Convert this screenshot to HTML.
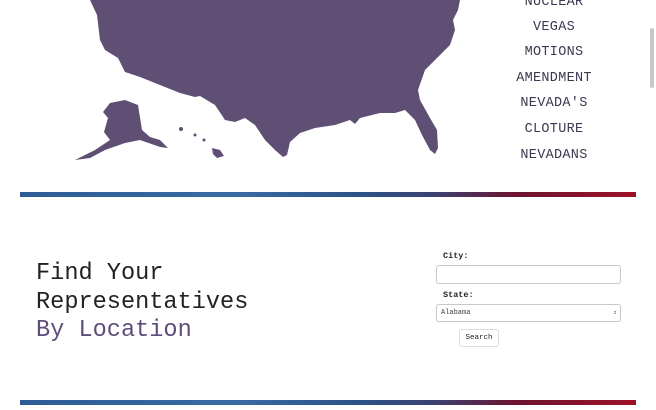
<!DOCTYPE html>
<html><head><meta charset="utf-8"><style>
html,body{margin:0;padding:0;background:#fff;width:656px;height:410px;overflow:hidden;position:relative;font-family:"Liberation Mono",monospace}
.w{position:absolute;left:500px;width:108px;text-align:center;font-size:13.5px;color:#3f3650;letter-spacing:0.3px}
.stripe{position:absolute;left:20px;width:616px;height:5px;background:linear-gradient(90deg,#2d5d94 0%,#3a6aa3 35%,#2b5388 55%,#3d3f6e 68%,#6a1530 80%,#9e1028 100%)}
h1{position:absolute;left:36px;top:260px;margin:0;font-weight:normal;font-size:23.6px;line-height:28.5px;color:#222}
h1 span{color:#5e4d7c}
.lab{position:absolute;font-size:8.5px;font-weight:bold;color:#222}
.box{position:absolute;left:436px;width:183px;border:1px solid #c8c8c8;border-radius:3px;background:#fff}
</style></head><body>
<svg width="656" height="200" style="position:absolute;left:0;top:0">
<polygon fill="#5f4f74" points="90,0 97,15 100,40 105,50 118,58 125,72 140,77 160,85 180,93 195,97 200,96 215,105 225,120 235,122 245,118 255,125 265,140 275,150 283,157 287,155 290,142 300,133 315,128 335,125 350,120 355,124 360,118 380,113 395,113 405,110 415,120 422,135 430,150 435,154 438,148 437,130 430,118 420,100 418,90 425,70 440,55 450,45 455,30 453,20 458,10 460,0"/>
<polygon fill="#5f4f74" points="110,103 125,100 138,105 142,130 150,137 160,140 168,148 160,147 140,140 125,143 105,150 90,158 75,160 95,150 110,140 104,132 108,118 103,112"/>
<polygon fill="#5f4f74" points="212,148 220,150 224,156 217,158 213,154"/>
<circle cx="181" cy="129" r="2" fill="#5f4f74"/><circle cx="195" cy="135" r="1.5" fill="#5f4f74"/><circle cx="204" cy="140" r="1.5" fill="#5f4f74"/>
<rect x="650" y="28" width="4" height="60" rx="2" fill="#c8c8c8"/>
</svg>
<div class="w" style="top:-5px">NUCLEAR</div>
<div class="w" style="top:20px">VEGAS</div>
<div class="w" style="top:45px">MOTIONS</div>
<div class="w" style="top:71px">AMENDMENT</div>
<div class="w" style="top:96px">NEVADA'S</div>
<div class="w" style="top:122px">CLOTURE</div>
<div class="w" style="top:148px">NEVADANS</div>
<div class="stripe" style="top:192px"></div>
<h1>Find Your<br>Representatives<br><span>By Location</span></h1>
<div class="lab" style="left:443px;top:251px">City:</div>
<div class="box" style="top:265px;height:17px"></div>
<div class="lab" style="left:443px;top:290px">State:</div>
<div class="box" style="top:304px;height:16px;font-size:7px;color:#444;line-height:16px;text-indent:4px">Alabama<span style="position:absolute;right:3px;font-size:6px">&#8661;</span></div>
<div style="position:absolute;left:459px;top:329px;width:38px;height:16px;border:1px solid #ddd;border-radius:3px;font-size:7.5px;text-align:center;line-height:16px;color:#222">Search</div>
<div class="stripe" style="top:400px"></div>
</body></html>
